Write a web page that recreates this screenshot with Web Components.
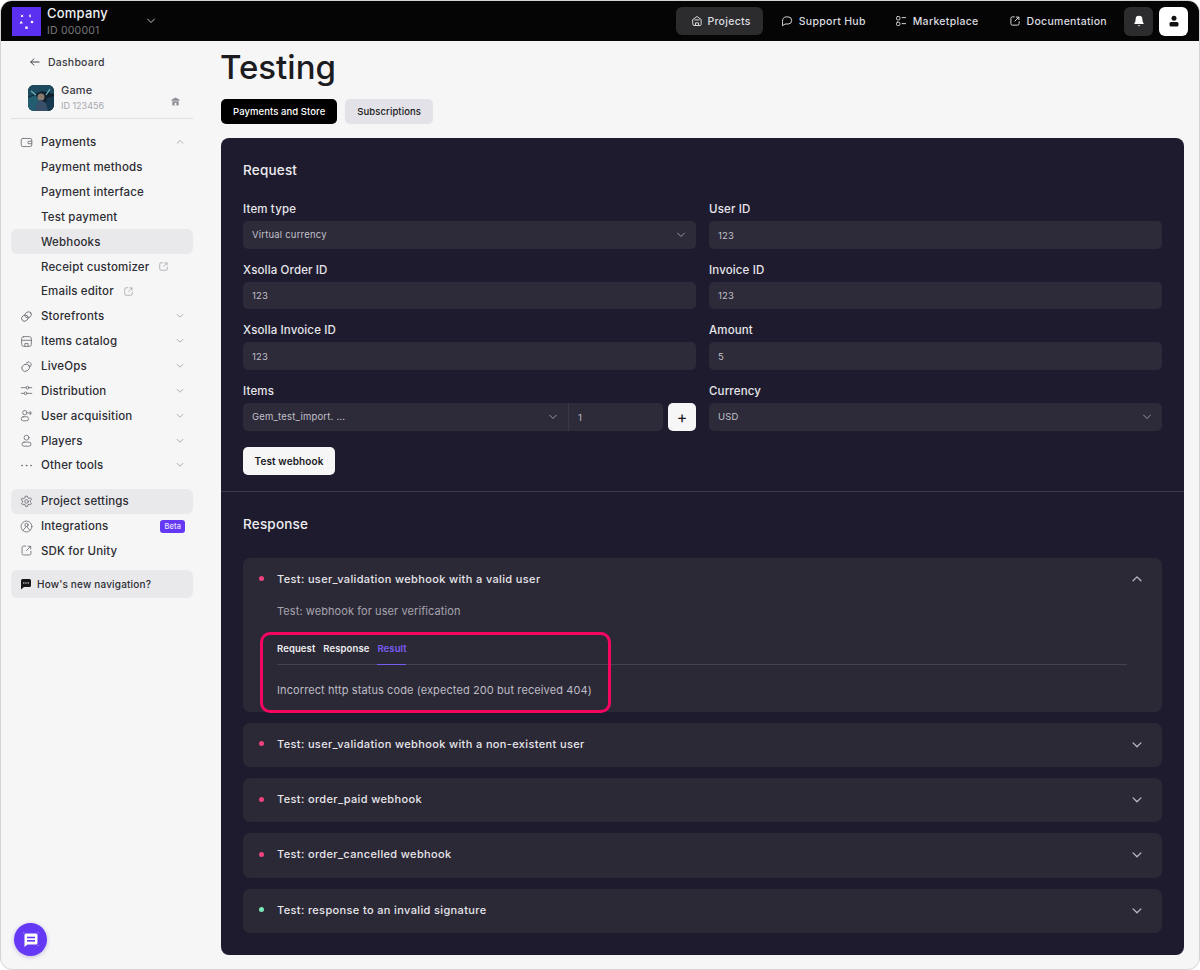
<!doctype html>
<html><head><meta charset="utf-8"><title>Testing</title>
<style>
html,body{margin:0;padding:0;background:#fff;font-family:Inter,"Liberation Sans",sans-serif}
</style></head><body>
<x-app></x-app>
<script>
const I={
 down:'<path d="M3.5 5.5 8 10l4.5-4.5"/>',
 up:'<path d="M3.5 10 8 5.5l4.5 4.5"/>',
 back:'<path d="M13.5 8h-11M6.5 3.8 2.300 8l4.200 4.200"/>',
 ext:'<path d="M7 2.500H4.500A2 2 0 0 0 2.500 4.500v7a2 2 0 0 0 2 2h7a2 2 0 0 0 2-2V9"/><path d="M8 8l5-5M9.800 2.800h3.400v3.400"/>',
 wallet:'<rect x="1.500" y="3" width="13" height="10" rx="2"/><path d="M14.500 6.500H11a1.500 1.500 0 0 0 0 3h3.500"/>',
 link:'<ellipse cx="6" cy="10" rx="4.200" ry="3.600" transform="rotate(-35 6 10)"/><ellipse cx="10" cy="6" rx="4.200" ry="3.600" transform="rotate(-35 10 6)"/>',
 store:'<rect x="2" y="2" width="12" height="12" rx="2.500"/><path d="M2 6.500h12M6 14v-3.500h4V14"/>',
 ops:'<ellipse cx="7" cy="9.500" rx="5" ry="4.200" transform="rotate(-30 7 9.500)"/><path d="M8 3.500 11 2l3 3-1 3"/>',
 sliders:'<path d="M1.500 4.500h6M11 4.500h3.500M1.500 11.500H5M8.500 11.500h6"/><circle cx="9.200" cy="4.500" r="1.700"/><circle cx="6.800" cy="11.500" r="1.700"/>',
 ua:'<circle cx="6" cy="4.500" r="2.700"/><rect x="1.500" y="9.500" width="9" height="5" rx="2.500"/><path d="M12.500 3v4M10.500 5h4"/>',
 user:'<circle cx="8" cy="4.500" r="3"/><rect x="2.500" y="10" width="11" height="5" rx="2.500"/>',
 gear:'<circle cx="8" cy="8" r="2.200"/><path d="M6.800 1.500h2.400l.4 1.900 1.500.8 1.800-.7 1.200 2.100-1.400 1.300v1.700l1.400 1.300-1.200 2.100-1.800-.7-1.500.8-.4 1.900H6.800l-.4-1.900-1.500-.8-1.800.7-1.200-2.100 1.400-1.300V7.100L1.400 5.800l1.200-2.100 1.800.7 1.500-.8z"/>',
 integ:'<circle cx="8" cy="8" r="6.700"/><circle cx="8" cy="6" r="2"/><path d="M4 12.500 8 7.500l4 5"/>',
 home:'<path d="M2.500 6 8 2l5.500 4v6.500a1.500 1.500 0 0 1-1.500 1.500H4a1.500 1.500 0 0 1-1.500-1.500z"/><path d="M6 14v-3.500h4V14M5 6.500h6"/>',
 chat:'<path d="M2 8a5 5 0 0 1 5-5.500h2.500a4.500 4.500 0 0 1 0 9.500H5.500L2.500 14z"/>',
 market:'<rect x="2" y="2" width="4.500" height="4.500" rx="1.500"/><rect x="2" y="9.500" width="4.500" height="4.500" rx="1.500"/><path d="M9.500 3.500H14M9.500 11.500H14"/>',
 dots:'<circle cx="2.500" cy="8" r=".6"/><circle cx="8" cy="8" r=".6"/><circle cx="13.500" cy="8" r=".6"/>'
};
const ico=(n,s=16,c='currentColor',w=1.3)=>`<svg width="${s}" height="${s}" viewBox="0 0 16 16" fill="none" stroke="${c}" stroke-width="${w}" stroke-linecap="round" stroke-linejoin="round" style="display:block;flex:none">${I[n]}</svg>`;
function def(name,css,html){
 customElements.define(name,class extends HTMLElement{
  constructor(){super();this.attachShadow({mode:'open'})}
  connectedCallback(){this.shadowRoot.innerHTML=`<style>${css}</style>`+(typeof html==='function'?html(this):html);}
 });
}
/* ---------- top bar ---------- */
def('x-top-link',`:host{display:flex;align-items:center;gap:6px;height:28px;padding:0 13px 0 14px;border-radius:6px;color:#dcdce0;font-size:10.500px;font-weight:500;letter-spacing:.3px;white-space:nowrap}
:host([active]){background:#2c2c2e;padding:0 12px 0 15px;gap:4px}`,h=>ico(h.getAttribute('icon'),12,'#dcdce0',1.3)+'<slot></slot>');
def('x-topbar',`:host{display:flex;align-items:center;height:40px;background:#050505;padding:0 11px;flex:none}
.logo{width:29px;height:29px;background:#5c30f0;display:flex;align-items:center;justify-content:center;flex:none;margin-right:6px}
.co{display:flex;flex-direction:column;width:98px}
.n{font-size:13px;font-weight:500;color:#f1f1f3;line-height:16px;letter-spacing:.2px}
.i{font-size:10.500px;color:#77777d;line-height:14px;margin-top:3px;letter-spacing:.2px}
.chev{margin-right:auto}
nav{display:flex;align-items:center;gap:3px}
.sq{width:29px;height:29px;border-radius:6px;display:flex;align-items:center;justify-content:center;flex:none}`,
`<div class="logo"><svg width="17" height="17" viewBox="0 0 17 17" fill="#fff"><path d="M3 1.800 5.200 4M5.200 1.800 3 4" stroke="#fff" stroke-width="1"/><rect x="11.300" y="1.600" width="1.400" height="2.600"/><path d="M1.500 10.500l1.700-2.700 1.700 2.700z"/><circle cx="14" cy="9" r="1.300"/><rect x="7.300" y="13.500" width="2.400" height="2.400"/></svg></div>
<div class="co"><div class="n">Company</div><div class="i">ID 000001</div></div>
<div class="chev">${ico('down',12,'#c9c9cd',1.3)}</div>
<nav>
<x-top-link active icon="home">Projects</x-top-link>
<x-top-link icon="chat" style="margin:0 -1px 0 1px">Support Hub</x-top-link>
<x-top-link icon="market">Marketplace</x-top-link>
<x-top-link icon="ext">Documentation</x-top-link>
<div class="sq" style="background:#2c2c2e;margin-left:1px"><svg width="12" height="12" viewBox="0 0 12 12" fill="#fff"><path d="M6 .800a3.400 3.400 0 0 0-3.400 3.400c0 2.600-1 3.700-1.300 4.200-.2.300 0 .7.400.7h8.600c.4 0 .6-.4.400-.7-.3-.5-1.300-1.600-1.300-4.200A3.400 3.400 0 0 0 6 .800z"/><path d="M4.700 10.200h2.600L6 11.600z"/></svg></div>
<div class="sq" style="background:#fff;margin-left:3px"><svg width="12" height="12" viewBox="0 0 12 12" fill="#111"><circle cx="6" cy="3.300" r="2.500"/><rect x="1.500" y="7" width="9" height="4.500" rx="1.500"/></svg></div>
</nav>`);
/* ---------- sidebar ---------- */
def('x-nav-item',`:host{display:flex;align-items:center;height:24.850px;border-radius:6px;padding:0 8px 0 9px;font-size:11.500px;font-weight:500;letter-spacing:.16px;color:#2d2d33;box-sizing:border-box;white-space:nowrap;flex:none}
:host([sub]){padding-left:30px}
:host([on]){background:#e9e9ec}
.ic{width:21px;flex:none}
.end{margin-left:auto;display:flex}
.x{margin-left:9px}
.b{margin-left:auto;background:#6438f5;color:#e8e2ff;font-size:7.500px;border-radius:3px;height:13px;line-height:13px;padding:0 4px;letter-spacing:.1px;font-weight:500}`,
h=>{const a=n=>h.getAttribute(n);return (a('icon')?`<span class="ic">${ico(a('icon'),13,'#6f6f76',1.050)}</span>`:'')+'<slot></slot>'+
(a('ext')!==null?`<span class="x">${ico('ext',11,'#a3a3a9',1.100)}</span>`:'')+
(a('beta')!==null?'<span class="b">Beta</span>':'')+
(a('chev')?`<span class="end">${ico(a('chev'),10,'#9a9aa0',1.300)}</span>`:'')});
def('x-sidebar',`:host{display:flex;flex-direction:column;width:182px;padding:0 0 0 10px;flex:none}
.dash{display:flex;align-items:center;height:20px;margin-top:11px;padding-left:18px;font-size:10.500px;font-weight:500;letter-spacing:.22px;color:#3b3b42;gap:7px}
.game{display:flex;align-items:center;height:28px;margin-top:12px;padding-left:17px;padding-right:13px}
.thumb{width:26px;height:26px;border-radius:6px;overflow:hidden;flex:none;margin-right:7px}
.g1{font-size:11px;font-weight:500;color:#3b3b42;line-height:13px;letter-spacing:.2px}
.g2{font-size:9px;color:#a8a8ae;line-height:13px;letter-spacing:0;margin-top:2px}
.pin{margin-left:auto;margin-top:3px}
hr{border:0;border-top:1px solid #dde1e6;margin:6px 0 11px 0;width:182px}
.gap{height:11px;flex:none}
.fb{display:flex;align-items:center;gap:5px;height:28px;margin-top:6.500px;background:#e9e9ec;border-radius:6px;padding-left:9px;font-size:10px;font-weight:500;letter-spacing:.18px;color:#2d2d33}`,
`<div class="dash">${ico('back',12,'#3b3b42',1.300)}<span>Dashboard</span></div>
<div class="game"><div class="thumb"><svg width="26" height="26" viewBox="0 0 26 26"><rect width="26" height="26" fill="#10212e"/><path d="M0 0h26v9L14 6 0 12z" fill="#1d4a5c"/><path d="M0 26V13l7-3 5 5-3 11z" fill="#235d70"/><path d="M26 26V11l-7 2-3 13z" fill="#16394f"/><circle cx="13" cy="12" r="3.500" fill="#8a7a70"/><path d="M7 26l2-9 4-2 5 3 2 8z" fill="#3a4f6a"/><path d="M3 6l5 4M22 4l-4 6" stroke="#6fb7c4" stroke-width="1.200"/></svg></div>
<div><div class="g1">Game</div><div class="g2">ID 123456</div></div>
<div class="pin"><svg width="9" height="9" viewBox="0 0 10 10" fill="#8d8d93"><path d="M5 .500 9.500 3v1.300H.500V3z"/><rect x="1.500" y="4.800" width="7" height="4.500"/><rect x="4" y="6.500" width="2" height="2.800" fill="#f6f6f7"/></svg></div></div>
<hr>
<x-nav-item icon="wallet" chev="up">Payments</x-nav-item>
<x-nav-item sub>Payment methods</x-nav-item>
<x-nav-item sub>Payment interface</x-nav-item>
<x-nav-item sub>Test payment</x-nav-item>
<x-nav-item sub on>Webhooks</x-nav-item>
<x-nav-item sub ext>Receipt customizer</x-nav-item>
<x-nav-item sub ext>Emails editor</x-nav-item>
<x-nav-item icon="link" chev="down">Storefronts</x-nav-item>
<x-nav-item icon="store" chev="down">Items catalog</x-nav-item>
<x-nav-item icon="ops" chev="down">LiveOps</x-nav-item>
<x-nav-item icon="sliders" chev="down">Distribution</x-nav-item>
<x-nav-item icon="ua" chev="down">User acquisition</x-nav-item>
<x-nav-item icon="user" chev="down">Players</x-nav-item>
<x-nav-item icon="dots" chev="down">Other tools</x-nav-item>
<div class="gap"></div>
<x-nav-item icon="gear" on>Project settings</x-nav-item>
<x-nav-item icon="integ" beta>Integrations</x-nav-item>
<x-nav-item icon="ext">SDK for Unity</x-nav-item>
<div class="fb"><svg width="12" height="12" viewBox="0 0 12 12" fill="#151518"><path d="M1 2.500A1.500 1.500 0 0 1 2.500 1h7A1.500 1.500 0 0 1 11 2.500v5A1.500 1.500 0 0 1 9.500 9H4l-3 2.500z"/><g fill="#e9e9ec"><circle cx="3.800" cy="5" r=".7"/><circle cx="6" cy="5" r=".7"/><circle cx="8.200" cy="5" r=".7"/></g></svg><span>How's new navigation?</span></div>`);
/* ---------- form ---------- */
def('x-field',`:host{display:flex;flex-direction:column;min-width:0}
label{display:block;height:16px;line-height:18px;font-size:11.500px;font-weight:500;letter-spacing:.14px;color:#e6e6ea;margin-bottom:5px}
.row{display:flex;gap:5px}`,h=>`<label>${h.getAttribute('label')}</label><div class="row"><slot></slot></div>`);
def('x-input',`:host{display:flex;align-items:center;flex:1;height:27.670px;background:#2d2a3a;border-radius:5px;padding:1px 9px 0;box-sizing:border-box;font-size:9.500px;color:#c2c1c9;letter-spacing:.2px;min-width:0}
:host([select]){padding:0 9px}
.c{margin-left:auto}`,h=>'<slot></slot>'+(h.hasAttribute('select')?`<span class="c">${ico('down',12,'#a5a4ad',1.200)}</span>`:''));
def('x-btn',`:host{display:inline-flex;align-items:center;justify-content:center;height:28px;background:#f6f6f7;color:#17171c;border-radius:5px;font-size:10px;font-weight:600;letter-spacing:.1px;box-sizing:border-box;white-space:nowrap}`,'<slot></slot>');
/* ---------- accordion ---------- */
def('x-acc',`:host{display:block;background:#2c2937;border-radius:7px;position:relative;flex:none}
.h{display:flex;align-items:center;height:44.300px;padding:0 18px 2px 16px;box-sizing:border-box;font-size:11px;font-weight:500;letter-spacing:.36px;color:#e7e6ea}
:host([open]) .h{height:42px;padding-bottom:0}
.d{width:5px;height:5px;border-radius:50%;background:#f0437d;margin-right:13px;flex:none}
:host([ok]) .d{background:#7ce8b5}
.c{margin-left:auto;margin-top:2px}
:host([open]) .c{margin-top:0}`,
h=>`<div class="h"><span class="d"></span><span>${h.getAttribute('title')}</span><span class="c">${ico(h.hasAttribute('open')?'up':'down',14,'#bdbcc4',1.400)}</span></div><slot></slot>`);
def('x-result',`:host{display:block;padding:0 35px 0 34px;height:112px;box-sizing:border-box}
.s{font-size:11px;color:#a6a5ae;letter-spacing:.08px;line-height:16px;padding-top:3px}
.t{display:flex;height:32px;margin-top:14px;gap:8px;border-bottom:1px solid #45424f;box-sizing:border-box;font-size:9.500px;font-weight:600;letter-spacing:.1px;color:#eeeef0;position:relative}
.t span{display:block;padding-top:10px}
.t .a{color:#7a5cf2;box-shadow:0 1px 0 #7a5cf2;height:31px;box-sizing:border-box;width:29px}
.r{font-size:11px;color:#bdbcc4;letter-spacing:.1px;line-height:16px;margin-top:17px}
.note{position:absolute;left:17px;top:74.500px;width:351px;height:81px;box-sizing:border-box;border:3px solid #f5065f;border-radius:10px;pointer-events:none}`,
`<div class="s">Test: webhook for user verification</div>
<div class="t"><span>Request</span><span>Response</span><span class="a">Result</span></div>
<div class="r">Incorrect http status code (expected 200 but received 404)</div>
<div class="note"></div>`);
/* ---------- main ---------- */
def('x-main',`:host{display:block;flex:1;min-width:0;padding:0 15px 0 28px}
h1{margin:0;font-size:33px;font-weight:500;line-height:44px;letter-spacing:0;text-indent:-1px;color:#1b1b20;margin-top:4px}
.tabs{display:flex;gap:8px;margin-top:10px}
.tb{display:flex;align-items:center;justify-content:center;height:25px;border-radius:5px;font-size:9.500px;font-weight:500;letter-spacing:.08px;background:#e2e2e8;color:#1b1b20;padding:0 12px;white-space:nowrap}
.tb.on{background:#000;color:#fff}
.card{background:#1e1b2e;border-radius:8px;margin-top:14px;height:817px;box-sizing:border-box;display:flex;flex-direction:column}
.sec{padding:22px 22px 16px}
h2{margin:0;font-size:13.500px;font-weight:500;line-height:20px;letter-spacing:.2px;color:#eeeef0}
.g{display:grid;grid-template-columns:453px 453px;column-gap:13px;row-gap:12px;margin-top:20px}
.divider{height:1px;background:#3c3947;flex:none}
.list{display:flex;flex-direction:column;gap:11px;margin-top:24px}`,
`<h1>Testing</h1>
<div class="tabs"><div class="tb on">Payments and Store</div><div class="tb">Subscriptions</div></div>
<div class="card">
 <div class="sec"><h2>Request</h2>
  <div class="g">
   <x-field label="Item type"><x-input select>Virtual currency</x-input></x-field>
   <x-field label="User ID"><x-input>123</x-input></x-field>
   <x-field label="Xsolla Order ID"><x-input>123</x-input></x-field>
   <x-field label="Invoice ID"><x-input>123</x-input></x-field>
   <x-field label="Xsolla Invoice ID"><x-input>123</x-input></x-field>
   <x-field label="Amount"><x-input>5</x-input></x-field>
   <x-field label="Items"><x-input select style="flex:none;width:325px;border-radius:5px 0 0 5px">Gem_test_import. ...</x-input><x-input style="flex:none;width:95px;margin-left:-5px;border-left:1px solid #3a3746;border-radius:0 5px 5px 0">1</x-input><x-btn style="width:28px;font-size:16px;font-weight:400;height:27.670px">+</x-btn></x-field>
   <x-field label="Currency"><x-input select>USD</x-input></x-field>
  </div>
  <x-btn style="width:92px;margin-top:16px;display:flex">Test webhook</x-btn>
 </div>
 <div class="divider"></div>
 <div class="sec" style="padding-top:22px"><h2>Response</h2>
  <div class="list">
   <x-acc open title="Test: user_validation webhook with a valid user"><x-result></x-result></x-acc>
   <x-acc title="Test: user_validation webhook with a non-existent user"></x-acc>
   <x-acc title="Test: order_paid webhook"></x-acc>
   <x-acc title="Test: order_cancelled webhook"></x-acc>
   <x-acc ok title="Test: response to an invalid signature"></x-acc>
  </div>
 </div>
</div>`);
def('x-app',`:host{display:flex;flex-direction:column;width:1200px;height:970px;box-sizing:border-box;border:1px solid #d4d4d6;border-radius:12px;overflow:hidden;background:#f6f6f7;position:relative}
.body{display:flex;flex:1;min-height:0}
.fab{position:absolute;left:13px;top:922px;width:33px;height:33px;border-radius:50%;background:#6438f5;display:flex;align-items:center;justify-content:center;box-shadow:0 1px 4px rgba(60,30,160,.3)}`,
`<x-topbar></x-topbar><div class="body"><x-sidebar></x-sidebar><x-main></x-main></div>
<div class="fab"><svg width="20" height="20" viewBox="0 0 20 20"><path d="M3.500 5a1.500 1.500 0 0 1 1.500-1.500h10A1.500 1.500 0 0 1 16.500 5v8a1.500 1.500 0 0 1-1.500 1.500H6.500L3.500 17z" fill="#fff"/><rect x="6" y="6.700" width="8" height="1.600" fill="#6438f5"/><rect x="6" y="10" width="8" height="1.600" fill="#6438f5"/><g fill="#fff"><rect x="2.500" y="2.500" width=".8" height=".8"/><rect x="16.700" y="2.500" width=".8" height=".8"/><rect x="16.700" y="15" width=".8" height=".8"/></g></svg></div>`);
</script></body></html>
